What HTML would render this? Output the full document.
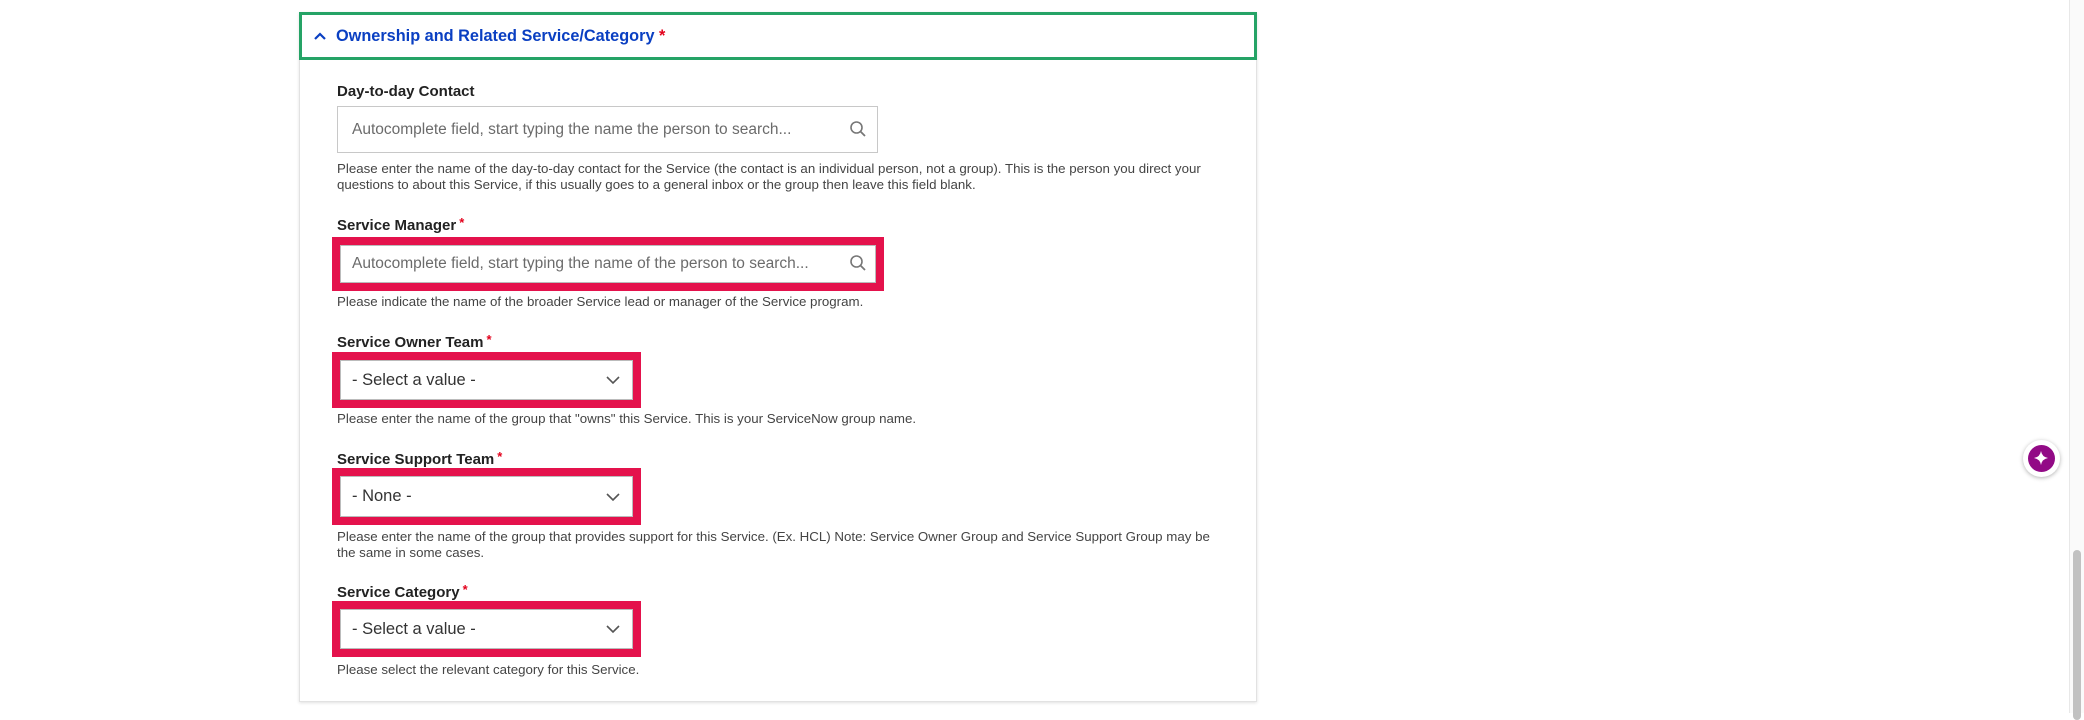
<!DOCTYPE html>
<html><head><meta charset="utf-8"><style>
*{box-sizing:border-box;margin:0;padding:0}
body{width:2084px;height:713px;background:#fff;font-family:"Liberation Sans",Arial,sans-serif;position:relative;overflow:hidden}
.panel{position:absolute;left:299px;top:12px;width:958px;height:690px;border:1px solid #e2e2e2;box-shadow:0 1px 3px rgba(0,0,0,.12);background:#fff}
.head{position:absolute;left:299px;top:12px;width:958px;height:48px;border:3px solid #25a366;background:#fff}
.head span.t{position:absolute;left:34px;top:12px;font-size:16.3px;font-weight:bold;color:#0a3fc2;white-space:nowrap}
.req{color:#e3001b;font-weight:bold}
.lbl{position:absolute;left:337px;font-size:15px;font-weight:bold;color:#222;white-space:nowrap}
.lbl .req{font-size:13px;position:relative;top:-3px;margin-left:3px}
.help{position:absolute;left:337px;font-size:13.3px;color:#444;line-height:16px;white-space:nowrap}
.inp{position:absolute;background:#fff;border:1px solid #c8c8c8;font-size:15.5px;color:#6b6b6b;padding-left:14px;display:flex;align-items:center;white-space:nowrap}
.red{position:absolute;border:8px solid #e4124c;background:#fff}
.red .in{position:absolute;inset:0;border:1px solid #bbb;display:flex;align-items:center;padding-left:11px;font-size:16.5px;color:#333;white-space:nowrap}
.red .in.ph{color:#6b6b6b;font-size:15.5px}
svg{position:absolute}
</style></head><body>
<div class="panel"></div>
<div class="head"><svg width="16" height="16" viewBox="0 0 16 16" style="left:10px;top:13px"><path d="M3 11 L8 6 L13 11" fill="none" stroke="#0a3fc2" stroke-width="2.2"/></svg><span class="t">Ownership and Related Service/Category <span class="req">*</span></span></div>

<div class="lbl" style="top:83px">Day-to-day Contact</div>
<div class="inp" style="left:337px;top:106px;width:541px;height:47px">Autocomplete field, start typing the name the person to search...</div>
<svg width="18" height="18" viewBox="0 0 18 18" style="left:849px;top:120px"><circle cx="7.5" cy="7.5" r="5.5" fill="none" stroke="#777" stroke-width="1.6"/><path d="M11.5 11.5 L16 16" stroke="#777" stroke-width="1.8"/></svg>
<div class="help" style="top:161px">Please enter the name of the day-to-day contact for the Service (the contact is an individual person, not a group). This is the person you direct your<br>questions to about this Service, if this usually goes to a general inbox or the group then leave this field blank.</div>

<div class="lbl" style="top:217px">Service Manager<span class="req">*</span></div>
<div class="red" style="left:332px;top:237px;width:552px;height:54px"><div class="in ph">Autocomplete field, start typing the name of the person to search...</div></div>
<svg width="18" height="18" viewBox="0 0 18 18" style="left:849px;top:254px"><circle cx="7.5" cy="7.5" r="5.5" fill="none" stroke="#777" stroke-width="1.6"/><path d="M11.5 11.5 L16 16" stroke="#777" stroke-width="1.8"/></svg>
<div class="help" style="top:294px">Please indicate the name of the broader Service lead or manager of the Service program.</div>

<div class="lbl" style="top:334px">Service Owner Team<span class="req">*</span></div>
<div class="red" style="left:332px;top:352px;width:309px;height:56px"><div class="in">- Select a value -</div></div>
<svg width="16" height="10" viewBox="0 0 16 10" style="left:605px;top:375px"><path d="M2 2 L8 8 L14 2" fill="none" stroke="#555" stroke-width="1.6"/></svg>
<div class="help" style="top:411px">Please enter the name of the group that "owns" this Service. This is your ServiceNow group name.</div>

<div class="lbl" style="top:451px">Service Support Team<span class="req">*</span></div>
<div class="red" style="left:332px;top:468px;width:309px;height:57px"><div class="in">- None -</div></div>
<svg width="16" height="10" viewBox="0 0 16 10" style="left:605px;top:492px"><path d="M2 2 L8 8 L14 2" fill="none" stroke="#555" stroke-width="1.6"/></svg>
<div class="help" style="top:529px">Please enter the name of the group that provides support for this Service. (Ex. HCL) Note: Service Owner Group and Service Support Group may be<br>the same in some cases.</div>

<div class="lbl" style="top:584px">Service Category<span class="req">*</span></div>
<div class="red" style="left:332px;top:601px;width:309px;height:56px"><div class="in">- Select a value -</div></div>
<svg width="16" height="10" viewBox="0 0 16 10" style="left:605px;top:624px"><path d="M2 2 L8 8 L14 2" fill="none" stroke="#555" stroke-width="1.6"/></svg>
<div class="help" style="top:662px">Please select the relevant category for this Service.</div>

<div style="position:absolute;left:2023px;top:440px;width:37px;height:37px;border-radius:50%;background:#fff;box-shadow:0 1px 4px rgba(0,0,0,.3)"></div>
<div style="position:absolute;left:2028px;top:445px;width:27px;height:27px;border-radius:50%;background:#920a86"></div>
<svg width="16" height="16" viewBox="0 0 16 16" style="left:2033px;top:450px"><path d="M8 1 Q9 7 15 8 Q9 9 8 15 Q7 9 1 8 Q7 7 8 1Z" fill="#fff"/></svg>

<div style="position:absolute;left:2069px;top:0;width:15px;height:713px;background:#fafafa;border-left:1px solid #e8e8e8"></div>
<div style="position:absolute;left:2073px;top:550px;width:8px;height:170px;border-radius:4px;background:#c1c1c1"></div>
</body></html>
